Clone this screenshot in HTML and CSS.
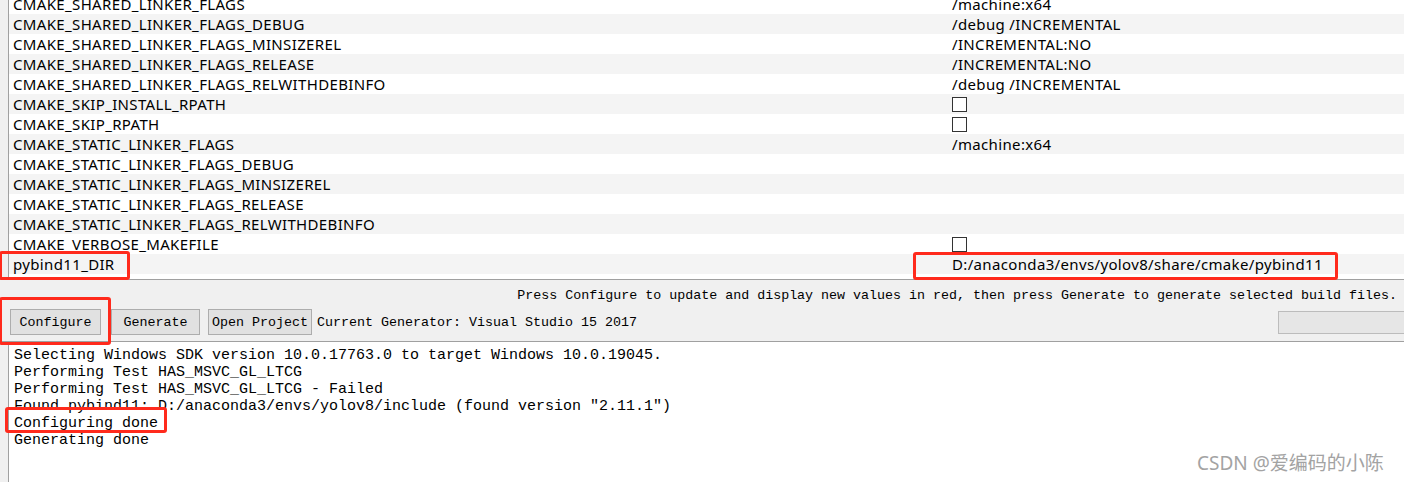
FILE: index.html
```html
<!DOCTYPE html>
<html>
<head>
<meta charset="utf-8">
<title>CMake</title>
<link rel="stylesheet" href="styles.css">
</head>
<body>
<div class="app">
  <div class="table-wrap">
    <div class="rows">
      <div class="row"><div class="name">CMAKE_SHARED_LINKER_FLAGS</div><div class="val">/machine:x64</div></div>
      <div class="row"><div class="name">CMAKE_SHARED_LINKER_FLAGS_DEBUG</div><div class="val">/debug /INCREMENTAL</div></div>
      <div class="row"><div class="name">CMAKE_SHARED_LINKER_FLAGS_MINSIZEREL</div><div class="val">/INCREMENTAL:NO</div></div>
      <div class="row"><div class="name">CMAKE_SHARED_LINKER_FLAGS_RELEASE</div><div class="val">/INCREMENTAL:NO</div></div>
      <div class="row"><div class="name">CMAKE_SHARED_LINKER_FLAGS_RELWITHDEBINFO</div><div class="val">/debug /INCREMENTAL</div></div>
      <div class="row"><div class="name">CMAKE_SKIP_INSTALL_RPATH</div><div class="val"><span class="check"></span></div></div>
      <div class="row"><div class="name">CMAKE_SKIP_RPATH</div><div class="val"><span class="check"></span></div></div>
      <div class="row"><div class="name">CMAKE_STATIC_LINKER_FLAGS</div><div class="val">/machine:x64</div></div>
      <div class="row"><div class="name">CMAKE_STATIC_LINKER_FLAGS_DEBUG</div><div class="val"></div></div>
      <div class="row"><div class="name">CMAKE_STATIC_LINKER_FLAGS_MINSIZEREL</div><div class="val"></div></div>
      <div class="row"><div class="name">CMAKE_STATIC_LINKER_FLAGS_RELEASE</div><div class="val"></div></div>
      <div class="row"><div class="name">CMAKE_STATIC_LINKER_FLAGS_RELWITHDEBINFO</div><div class="val"></div></div>
      <div class="row"><div class="name">CMAKE_VERBOSE_MAKEFILE</div><div class="val"><span class="check"></span></div></div>
      <div class="row"><div class="name">pybind11_DIR</div><div class="val">D:/anaconda3/envs/yolov8/share/cmake/pybind11</div></div>
    </div>
  </div>
  <div class="panel">
    <div class="status">Press Configure to update and display new values in red, then press Generate to generate selected build files.</div>
    <div class="toolbar">
      <button class="btn btn-configure">Configure</button>
      <button class="btn btn-generate">Generate</button>
      <button class="btn btn-open">Open Project</button>
      <span class="generator">Current Generator: Visual Studio 15 2017</span>
      <div class="progress"></div>
    </div>
  </div>
  <div class="output">
    <div class="line">Selecting Windows SDK version 10.0.17763.0 to target Windows 10.0.19045.</div>
    <div class="line">Performing Test HAS_MSVC_GL_LTCG</div>
    <div class="line">Performing Test HAS_MSVC_GL_LTCG - Failed</div>
    <div class="line">Found pybind11: D:/anaconda3/envs/yolov8/include (found version "2.11.1")</div>
    <div class="line">Configuring done</div>
    <div class="line">Generating done</div>
  </div>

  <div class="mark mark-name"></div>
  <div class="mark mark-path"></div>
  <div class="mark mark-configure"></div>
  <div class="mark mark-done"></div>
  <div class="watermark">CSDN @爱编码的小陈</div>
</div>
</body>
</html>
```
FILE: styles.css
```css
* { box-sizing: border-box; }
html, body { margin: 0; padding: 0; }
body {
  background: #f0f0f0;
  width: 1404px;
  height: 482px;
  overflow: hidden;
}
.app {
  position: relative;
  height: 482px;
  display: flex;
  flex-direction: column;
}
.table-wrap {
  flex-shrink: 0;
  margin-left: 8px;
  border-left: 1px solid #a0a0a0;
  background: #fff;
  height: 279px;
  overflow: hidden;
  font-family: "Noto Sans", "Open Sans", sans-serif;
  font-size: 15px;
  letter-spacing: 0.35px;
  color: #000;
}
.rows { margin-top: -6px; }
.row {
  display: flex;
  height: 20px;
  line-height: 20px;
  white-space: nowrap;
}
.row:nth-child(even) { background: #f4f4f4; }
.name { width: 939px; flex-shrink: 0; padding-left: 4px; }
.val { padding-left: 4px; flex: 1; }
.check {
  display: inline-block;
  width: 15px;
  height: 15px;
  border: 1px solid #333;
  background: #fff;
  vertical-align: top;
  margin-top: 3px;
}
.panel {
  flex-shrink: 0;
  border-top: 1px solid #a0a0a0;
  border-bottom: 1px solid #a0a0a0;
  background: #f0f0f0;
  height: 63px;
  padding-top: 8px;
  font-family: "Liberation Mono", monospace;
  font-size: 13.33px;
  color: #000;
}
.status {
  text-align: right;
  padding-right: 7px;
  height: 16px;
  line-height: 16px;
  white-space: nowrap;
}
.toolbar {
  display: flex;
  align-items: center;
  margin-top: 5px;
  padding-left: 10px;
  height: 26px;
}
.btn {
  flex-shrink: 0;
  font-family: "Liberation Mono", monospace;
  font-size: 13.33px;
  color: #000;
  background: #e1e1e1;
  border: 1px solid #adadad;
  height: 26px;
  padding: 0 3px;
  border-radius: 0;
  white-space: nowrap;
}
.btn-configure { width: 91px; }
.btn-generate { width: 89px; margin-left: 10px; }
.btn-open { width: 104px; margin-left: 8px; }
.generator { margin-left: 5px; white-space: nowrap; }
.progress {
  flex-shrink: 0;
  margin-left: auto;
  width: 126px;
  height: 23px;
  background: #e6e6e6;
  border: 1px solid #bcbcbc;
  border-right: none;
}
.output {
  flex: 1;
  margin-left: 8px;
  border-left: 1px solid #a0a0a0;
  background: #fff;
  padding: 5px 0 0 5px;
  font-family: "Liberation Mono", monospace;
  font-size: 15px;
  line-height: 17px;
  color: #000;
}
.line { white-space: pre; height: 17px; }
.mark {
  position: absolute;
  border: 3px solid #ff2a1c;
  border-radius: 3px;
}
.mark-name { left: -1px; top: 251px; width: 131px; height: 29px; }
.mark-path { left: 913px; top: 252px; width: 425px; height: 28px; }
.mark-configure { left: -1px; top: 297px; width: 112px; height: 48px; }
.mark-done { left: 5px; top: 407px; width: 162px; height: 26px; }
.watermark {
  position: absolute;
  left: 1197px;
  top: 452px;
  font-family: "Noto Sans", "Noto Sans CJK SC", sans-serif;
  font-size: 19px;
  line-height: 22px;
  color: #a3a3a3;
  text-shadow: 0 0 1px #fff;
  white-space: nowrap;
}
```
